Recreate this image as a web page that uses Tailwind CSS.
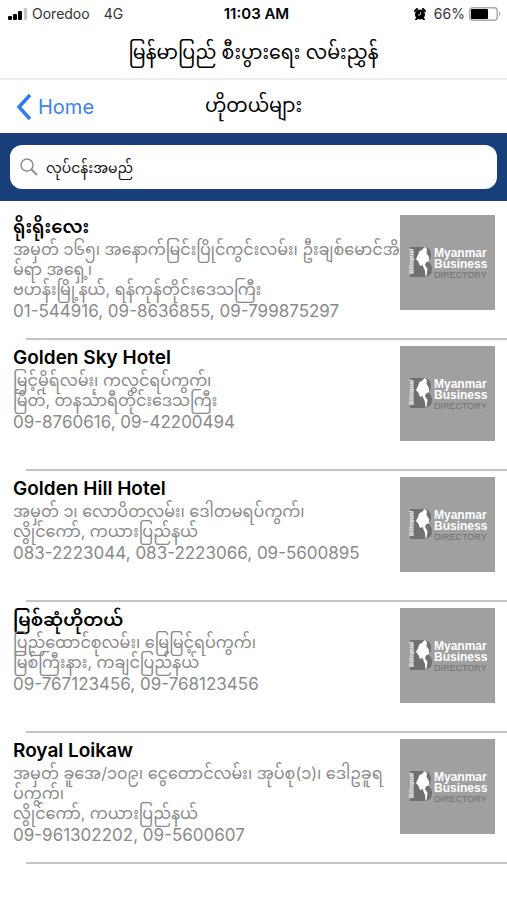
<!DOCTYPE html>
<html lang="my">
<head>
<meta charset="utf-8">
<meta name="viewport" content="width=device-width, initial-scale=1">
<title>ဟိုတယ်များ</title>
<script src="https://cdn.jsdelivr.net/npm/@tailwindcss/browser@4"></script>
</head>
<body class="bg-white text-black font-[Inter,'Noto_Sans_Myanmar','Noto_Sans','DejaVu_Sans',sans-serif]">
<svg class="hidden" aria-hidden="true">
  <symbol id="directory" viewBox="0 0 95 95">
    <rect width="95" height="95" fill="#a0a0a0"/>
    <path d="M10 32H23Q31 32 31 40Q31 44 28 46.500Q32 49 32 54Q32 62 23 62H10V59H14V35H10Z" fill="#707070"/>
    <path d="M24.500 32L27 34L26.500 38L29 42V46L26 47.500L25 50L27.500 54L26.500 61H25.500L25 56L22.500 50L20 51L18.500 47L16 44L18 40L19.500 36L22 35Z" fill="#fff"/>
    <text transform="translate(12.500 59) rotate(-90)" font-size="6" font-weight="700" fill="#eee" font-family="Liberation Sans">Bilingual</text>
    <g font-family="Liberation Sans,sans-serif">
      <text x="34" y="42" font-size="12" font-weight="700" fill="#fff">Myanmar</text>
      <text x="34" y="53" font-size="12" font-weight="700" fill="#fff">Business</text>
      <text x="34" y="63" font-size="9" fill="#707070">DIRECTORY</text>
    </g>
  </symbol>
</svg>
<header>
  <div class="grid grid-cols-3 items-center h-7 pl-2 pr-1.5 text-sm">
    <div class="flex items-center gap-1 whitespace-nowrap text-[#333]">
      <svg class="w-5 h-3" viewBox="0 0 20 12" fill="#000" aria-hidden="true"><rect y="8" width="4" height="4" rx="1"/><rect x="5" y="6" width="4" height="6" rx="1"/><rect x="10" y="3" width="4" height="9" rx="1"/><rect x="16" width="3" height="12" rx="1" fill="#c4c4c4"/></svg>
      <span>Ooredoo</span><span class="ml-2.5">4G</span>
    </div>
    <time class="text-center text-[15px] font-semibold ml-1">11:03 AM</time>
    <div class="flex items-center justify-end gap-1 text-[#333]">
      <svg class="w-3 h-3 mr-1" viewBox="0 0 12 12" aria-label="Alarm"><circle cx="6" cy="6.500" r="5"/><path d="M1 3L3 1M11 3L9 1M3 10.500L2 11.500M9 10.500L10 11.500" stroke="#000" stroke-width="2" stroke-linecap="round"/><path d="M7 4L6 7H4" fill="none" stroke="#fff" stroke-width=".8"/></svg>
      <span>66%</span>
      <svg class="w-8 h-3.5" viewBox="0 0 32 14" aria-label="Battery"><rect x=".75" y=".75" width="27.500" height="12.500" rx="3" fill="#fff" stroke="#aaa" stroke-width="1.500"/><rect x="2" y="2" width="17" height="10" rx="1" fill="#000"/><path d="M30 4.500Q33 7 30 9.500Z" fill="#aaa"/></svg>
    </div>
  </div>
  <h1 class="h-[50px] leading-[50px] text-center text-[19px] whitespace-nowrap">မြန်မာပြည် စီးပွားရေး လမ်းညွှန်</h1>
  <nav class="grid grid-cols-3 items-center h-[55px] px-4 border-t-2 border-[#eee]">
    <a href="#" class="flex items-center gap-1.5 text-xl text-[#3b82f6]">
      <svg class="w-4 h-7" viewBox="0 0 16 28" fill="none" stroke="#2f7bf0" stroke-width="3.500" aria-hidden="true"><path d="M14 2L3 14L14 26"/></svg>Home</a>
    <h2 class="text-center text-[19px] whitespace-nowrap">ဟိုတယ်များ</h2>
  </nav>
</header>
<form class="bg-[#193f7a] px-[10px] py-3 h-[68px]">
  <label class="flex items-center gap-2 h-11 px-[10px] rounded-xl bg-white">
    <svg class="w-[18px] h-[18px] shrink-0" viewBox="0 0 18 18" fill="none" stroke="#909090" stroke-width="1.500" aria-hidden="true"><circle cx="7" cy="7" r="6"/><path d="M11.500 11.500L17 17" stroke-width="2"/></svg>
    <input type="search" aria-label="လုပ်ငန်းအမည်" placeholder="လုပ်ငန်းအမည်" class="w-full h-8 outline-none text-sm placeholder:text-[#111]">
  </label>
</form>
<main class="pt-2">
  <ul>
    <li class="relative flex h-[131px] pl-[13px] pr-3 pt-1.5 after:absolute after:bottom-0 after:left-[26px] after:right-0 after:h-0.5 after:bg-[#c4c4c4]">
      <div class="flex-1 min-w-0 whitespace-nowrap text-[#8a8a8a]"><h3 class="text-lg leading-6 font-semibold text-black">ရိုးရိုးလေး</h3><p class="text-base leading-5">အမှတ် ၁၆၅၊ အနောက်မြင်းပြိုင်ကွင်းလမ်း၊ ဦးချစ်မောင်အိ<br>မ်ရာ အရှေ့၊<br>ဗဟန်းမြို့နယ်, ရန်ကုန်တိုင်းဒေသကြီး</p><p class="text-[17px] leading-6">01-544916, 09-8636855, 09-799875297</p></div>
      <svg class="w-[95px] h-[95px] shrink-0" role="img" aria-label="Myanmar Business Directory"><use href="#directory"/></svg>
    </li>
    <li class="relative flex h-[131px] pl-[13px] pr-3 pt-1.5 after:absolute after:bottom-0 after:left-[26px] after:right-0 after:h-0.5 after:bg-[#c4c4c4]">
      <div class="flex-1 min-w-0 whitespace-nowrap text-[#8a8a8a]"><h3 class="text-[19px] leading-6 font-semibold text-black">Golden Sky Hotel</h3><p class="text-base leading-5">မြင့်မိုရ်လမ်း၊ ကလွင်ရပ်ကွက်၊<br>မြိတ်, တနင်္သာရီတိုင်းဒေသကြီး</p><p class="text-[17px] leading-6">09-8760616, 09-42200494</p></div>
      <svg class="w-[95px] h-[95px] shrink-0" role="img" aria-label="Myanmar Business Directory"><use href="#directory"/></svg>
    </li>
    <li class="relative flex h-[131px] pl-[13px] pr-3 pt-1.5 after:absolute after:bottom-0 after:left-[26px] after:right-0 after:h-0.5 after:bg-[#c4c4c4]">
      <div class="flex-1 min-w-0 whitespace-nowrap text-[#8a8a8a]"><h3 class="text-[19px] leading-6 font-semibold text-black">Golden Hill Hotel</h3><p class="text-base leading-5">အမှတ် ၁၊ လောပိတလမ်း၊ ဒေါတမရပ်ကွက်၊<br>လွိုင်ကော်, ကယားပြည်နယ်</p><p class="text-[17px] leading-6">083-2223044, 083-2223066, 09-5600895</p></div>
      <svg class="w-[95px] h-[95px] shrink-0" role="img" aria-label="Myanmar Business Directory"><use href="#directory"/></svg>
    </li>
    <li class="relative flex h-[131px] pl-[13px] pr-3 pt-1.5 after:absolute after:bottom-0 after:left-[26px] after:right-0 after:h-0.5 after:bg-[#c4c4c4]">
      <div class="flex-1 min-w-0 whitespace-nowrap text-[#8a8a8a]"><h3 class="text-lg leading-6 font-semibold text-black">မြစ်ဆုံဟိုတယ်</h3><p class="text-base leading-5">ပြည်ထောင်စုလမ်း၊ မြေမြင့်ရပ်ကွက်၊<br>မြစ်ကြီးနား, ကချင်ပြည်နယ်</p><p class="text-[17px] leading-6">09-767123456, 09-768123456</p></div>
      <svg class="w-[95px] h-[95px] shrink-0" role="img" aria-label="Myanmar Business Directory"><use href="#directory"/></svg>
    </li>
    <li class="relative flex h-[131px] pl-[13px] pr-3 pt-1.5 after:absolute after:bottom-0 after:left-[26px] after:right-0 after:h-0.5 after:bg-[#c4c4c4]">
      <div class="flex-1 min-w-0 whitespace-nowrap text-[#8a8a8a]"><h3 class="text-[19px] leading-6 font-semibold text-black">Royal Loikaw</h3><p class="text-base leading-5">အမှတ် ခူအေ/၁၀၉၊ ငွေတောင်လမ်း၊ အုပ်စု(၁)၊ ဒေါဥခူရ<br>ပ်ကွက်၊<br>လွိုင်ကော်, ကယားပြည်နယ်</p><p class="text-[17px] leading-6">09-961302202, 09-5600607</p></div>
      <svg class="w-[95px] h-[95px] shrink-0" role="img" aria-label="Myanmar Business Directory"><use href="#directory"/></svg>
    </li>
  </ul>
</main>
</body>
</html>
